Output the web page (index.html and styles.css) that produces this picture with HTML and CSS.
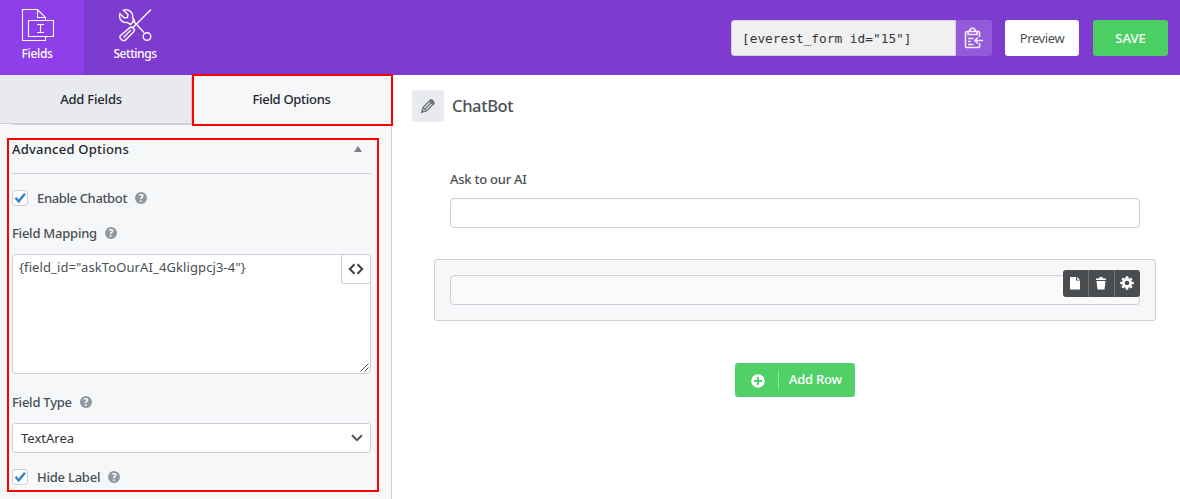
FILE: index.html
```html
<!DOCTYPE html>
<html lang="en">
<head>
<meta charset="utf-8">
<title>ChatBot</title>
<link rel="stylesheet" href="styles.css">
</head>
<body>
<header class="topbar">
  <nav class="nav">
    <a class="nav-item active">
      <svg width="34" height="34" viewBox="0 0 34 34" fill="none" stroke="#fff" stroke-width="1.1"><path d="M24.500 12.500V9.500L16.500 1.500H1.500V32.500H24.500V28.500M16.500 1.500V9.500H24.500"/><path d="M7.500 12.500H32.500V28.500H7.500z"/><path d="M16 16.500H23M16 24.500H23M19.500 16.500V24.500"/></svg>
      <span class="t-fields">Fields</span>
    </a>
    <a class="nav-item">
      <svg width="34" height="34" viewBox="0 0 34 34" fill="none" stroke="#fff" stroke-width="1.4"><path d="M33 1.500L14.500 20M14.500 12L26 24.500"/><circle cx="29" cy="28.500" r="3.800"/><path d="M5.500 2.200L10 6.500L9.500 9.500L6.500 10L2 5.800C.2 10.500 4 15.500 9.500 14.500L12.500 16.500L16.500 12.500L14.500 9.500C15.800 4.500 10.500.5 5.500 2.200z"/><path d="M12 19.500L14 19L16.500 21.500L16 23.500L7 32.500H4.500L2 30V28L12 19.500zM5.500 29.500L13 22"/></svg>
      <span class="t-settings">Settings</span>
    </a>
  </nav>
  <div class="actions">
    <div class="shortcode"><span class="code">[everest_form id="15"]</span>
      <button class="copy"><svg width="20" height="22" viewBox="0 0 20 22" fill="none" stroke="#f5edff" stroke-width="1.6"><path d="M16.500 10V5.500Q16.500 4.500 15.500 4.500H3.500Q2.500 4.500 2.500 5.500V19.500Q2.500 20.500 3.500 20.500H15.500Q16.500 20.500 16.500 19.500V16M5 7.500H14V4.500L12 3.500C12 .5 7 .5 7 3.500L5 4.500zM5 11.500H10.500M5 14.500H8M5 17.500H10.500M20 13.500H12M14.800 10.500L11.800 13.500L14.800 16.500"/></svg></button>
    </div>
    <button class="btn preview"><span class="t-preview">Preview</span></button>
    <button class="btn save"><span>SAVE</span></button>
  </div>
</header>
<div class="builder">
  <aside class="sidebar">
    <div class="tabs"><a class="tab add"><span>Add Fields</span></a><a class="tab options"><span>Field Options</span></a></div>
    <section class="panel">
      <div class="panel-title"><span>Advanced Options</span><i class="caret"></i></div>
      <div class="row check-row chatbot"><i class="checkbox"><svg width="14" height="14" viewBox="0 0 14 14"><path d="M2.500 6.800L5.700 10.300L12 2.700" fill="none" stroke="#3582c4" stroke-width="2.400"/></svg></i><span class="label t-enable">Enable Chatbot</span><i class="help">?</i></div>
      <div class="row mapping"><span class="label t-map">Field Mapping</span><i class="help">?</i></div>
      <div class="textarea"><span>{field_id="askToOurAI_4Gkligpcj3-4"}</span>
        <button class="tag"><svg width="16" height="12" viewBox="0 0 16 12" fill="none" stroke="#3c434a" stroke-width="2"><path d="M6.500 1.200L1.800 6L6.500 10.800M9.500 1.200L14.200 6L9.500 10.800"/></svg></button>
        <svg class="grip" width="9" height="9" viewBox="0 0 9 9" stroke="#555"><path d="M.5 8.500L8.500.5M4.500 8.500L8.500 4.500"/></svg>
      </div>
      <div class="row type"><span class="label t-type">Field Type</span><i class="help">?</i></div>
      <div class="select"><span>TextArea</span><svg width="12" height="8" viewBox="0 0 12 8"><path d="M1 1.200L6 6.200L11 1.200" fill="none" stroke="#50575e" stroke-width="2"/></svg></div>
      <div class="row check-row hide"><i class="checkbox"><svg width="14" height="14" viewBox="0 0 14 14"><path d="M2.500 6.800L5.700 10.300L12 2.700" fill="none" stroke="#3582c4" stroke-width="2.400"/></svg></i><span class="label t-hide">Hide Label</span><i class="help">?</i></div>
    </section>
    <div class="highlight tab-highlight"></div>
    <div class="highlight panel-highlight"></div>
  </aside>
  <main class="canvas">
    <div class="form-title"><i class="edit"><svg width="16" height="16" viewBox="0 0 16 16" fill="none" stroke="#6d747a" stroke-width="1.300"><path d="M1.700 14.300L3 9.500L10.500 2L14 5.500L6.500 13zM3 9.500L6.500 13M4.800 11.200L11 5"/><path d="M11 1.500Q12 1 13 2L14 3Q15 4 14.300 5L12.500 7L9 3.500zM1.700 14.300L2.500 11.500L4.500 13.500z" fill="#6d747a" stroke="none"/></svg></i><h1>ChatBot</h1></div>
    <div class="field"><label>Ask to our AI</label><div class="input"></div></div>
    <div class="field selected"><div class="input muted"></div>
      <div class="tools">
        <i><svg width="12" height="14" viewBox="0 0 12 14"><path d="M1 1H7V4.500H11V13.500H1zM8 1L11 3.800H8z" fill="#fff"/></svg></i>
        <i><svg width="12" height="14" viewBox="0 0 12 14"><path d="M1 2.500H4L4.500 1H7.500L8 2.500H11V4H1zM1.500 5H10.500L9.500 13.500H2.500z" fill="#fff"/></svg></i>
        <i><svg width="14" height="14" viewBox="0 0 14 14" fill="none" stroke="#fff"><circle cx="7" cy="7" r="3.600" stroke-width="2.600"/><path d="M7 .3V3M7 11V13.700M.3 7H3M11 7H13.700M2.300 2.300L4 4M10 10L11.700 11.700M2.300 11.700L4 10M10 4L11.700 2.300" stroke-width="2.600"/></svg></i>
      </div>
    </div>
    <button class="add-row"><svg width="14" height="14" viewBox="0 0 14 14"><circle cx="7" cy="7" r="6.800" fill="#fff"/><path d="M7 3V11M3 7H11" stroke="#50d168" stroke-width="2"/></svg><i class="divider"></i><span>Add Row</span></button>
  </main>
</div>
</body>
</html>
```
FILE: styles.css
```css
* { box-sizing: border-box; }
body { margin: 0; width: 1180px; height: 499px; overflow: hidden; background: #fff; color: #4a4f54; font: 500 13px/20px "Noto Sans", "Open Sans", sans-serif; }
button { border: 0; padding: 0; margin: 0; font: inherit; }
i { font-style: normal; }
svg { display: block; flex: none; }
span, label { white-space: nowrap; }
.topbar { height: 75px; display: flex; justify-content: space-between; background: #7e3bd0; color: #fff; }
.nav { display: flex; }
.nav-item { width: 84px; height: 75px; padding-top: 8px; display: flex; flex-direction: column; align-items: center; }
.nav-item:first-child svg { margin-right: 8px; }
.nav-item:first-child span { margin-right: 10px; }
.nav-item + .nav-item { width: 102px; }
.nav-item span { line-height: 20px; margin-top: 2px; font-size: 12px; }
.t-fields { letter-spacing: -.3px; }
.t-settings { letter-spacing: -.45px; }
.active { background: #8e3fea; }
.actions { display: flex; padding: 20px 12px 0 0; }
.shortcode { display: flex; width: 261px; height: 36px; border-radius: 3px; overflow: hidden; margin-right: 13px; }
.code { width: 225px; background: #f0f0f1; border: 1px solid #d3cee0; border-radius: 3px 0 0 3px; padding-left: 10px; color: #32373c; font: 12.8px/35px "DejaVu Sans Mono", monospace; }
.copy { display: flex; align-items: flex-start; width: 36px; padding: 7px 0 0 7px; background: #935bd9; }
.btn { height: 36px; border-radius: 3px; text-align: center; }
.preview { width: 74px; margin-right: 14px; background: #fff; color: #4c5157; font-weight: 400; }
.t-preview { letter-spacing: -.4px; }
.save { width: 75px; background: #4bcf62; color: #fff; }
.builder { display: flex; height: 424px; }
.sidebar { position: relative; width: 392px; background: #f5f7f9; border-right: 1px solid #cdd0d8; }
.tabs { display: flex; height: 50px; color: #24282d; }
.tab { width: 192px; height: 49px; text-align: center; line-height: 48px; letter-spacing: -.2px; }
.add { background: #e9eaef; border-right: 1px solid #cdd0d8; border-bottom: 1px solid #cdd0d8; padding-right: 9px; }
.options { width: 199px; letter-spacing: -.3px; }
.panel { padding: 0 20px 0 12px; }
.panel-title { display: flex; justify-content: space-between; height: 50px; border-top: 1px solid #cdd0d8; border-bottom: 1px solid #cdd0d8; margin-top: -1px; padding-top: 14px; color: #24282d; letter-spacing: .22px; }
.caret { width: 0; height: 0; margin: 7px 9px 0 0; border: 4px solid transparent; border-top: 0; border-bottom: 6px solid #7b7e84; }
.row { display: flex; align-items: center; height: 20px; }
.label { letter-spacing: -.24px; }
.t-enable { letter-spacing: -.36px; }
.checkbox { width: 16px; height: 16px; margin-right: 9px; background: #fff; border: 1px solid #cdd0d8; border-radius: 3px; }
.help { width: 12px; height: 12px; margin-left: 8px; border-radius: 50%; background: #8f98a1; color: #fff; text-align: center; font: bold 10px/12px "Noto Sans", sans-serif; }
.chatbot { margin-top: 14px; }
.mapping { margin-top: 15px; }
.textarea { position: relative; height: 120px; margin-top: 11px; padding: 2px 6px; background: #fff; border: 1px solid #cdd0d8; border-radius: 4px; font-weight: 400; letter-spacing: .11px; }
.tag { position: absolute; right: -1px; top: -1px; width: 30px; height: 30px; display: flex; align-items: center; justify-content: center; background: #fff; border: 1px solid #cdd0d8; border-radius: 3px; }
.grip { position: absolute; right: 1px; bottom: 1px; }
.type { margin-top: 18px; }
.select { display: flex; justify-content: space-between; align-items: center; height: 30px; margin-top: 11px; padding: 0 7px 0 8px; background: #fff; border: 1px solid #cdd0d8; border-radius: 3px; color: #32373c; font-weight: 400; }
.hide { margin-top: 14px; }
.highlight { position: absolute; z-index: 2; border: 2px solid #f00; }
.tab-highlight { left: 192px; top: -1px; width: 201px; height: 52px; }
.panel-highlight { left: 7px; top: 63px; width: 372px; height: 354px; }
.canvas { flex: 1; padding: 15px 24px 0 42px; }
.form-title { display: flex; align-items: center; height: 32px; margin-left: -22px; }
.edit { width: 32px; height: 32px; padding: 8px; background: #e9eaef; border-radius: 3px; }
h1 { margin: 0 0 0 8px; font: 500 16.500px/30px "Noto Sans", sans-serif; letter-spacing: -.35px; }
.field { margin-top: 47px; padding: 0 16px; }
.field label { display: block; height: 29px; letter-spacing: -.25px; }
.input { height: 30px; background: #fff; border: 1px solid #cdd0d8; border-radius: 4px; box-shadow: inset 0 1px 2px rgba(0,0,0,.04); }
.selected { position: relative; height: 62px; margin-top: 31px; padding: 15px; background: #f5f7f9; border: 1px solid #cdd0d8; border-radius: 3px; }
.muted { background: #fafafa; }
.tools { position: absolute; right: 15px; top: 10px; display: flex; width: 77px; height: 27px; background: #494d50; border-radius: 3px; }
.tools i { flex: 1; display: flex; align-items: center; justify-content: center; padding: 0 1px 2px 0; border-left: 1px solid #6e7275; }
.tools i:first-child { border-left: 0; }
.add-row { display: flex; align-items: center; width: 120px; height: 34px; margin: 42px 0 0 301px; padding-left: 16px; background: #50d168; color: #fff; border-radius: 3px; letter-spacing: -.25px; }
.add-row span { margin-bottom: 2px; }
.divider { width: 1px; height: 20px; margin: 0 10px 0 13px; background: #8be09a; }
.add-row svg { margin-top: 2px; }
```
